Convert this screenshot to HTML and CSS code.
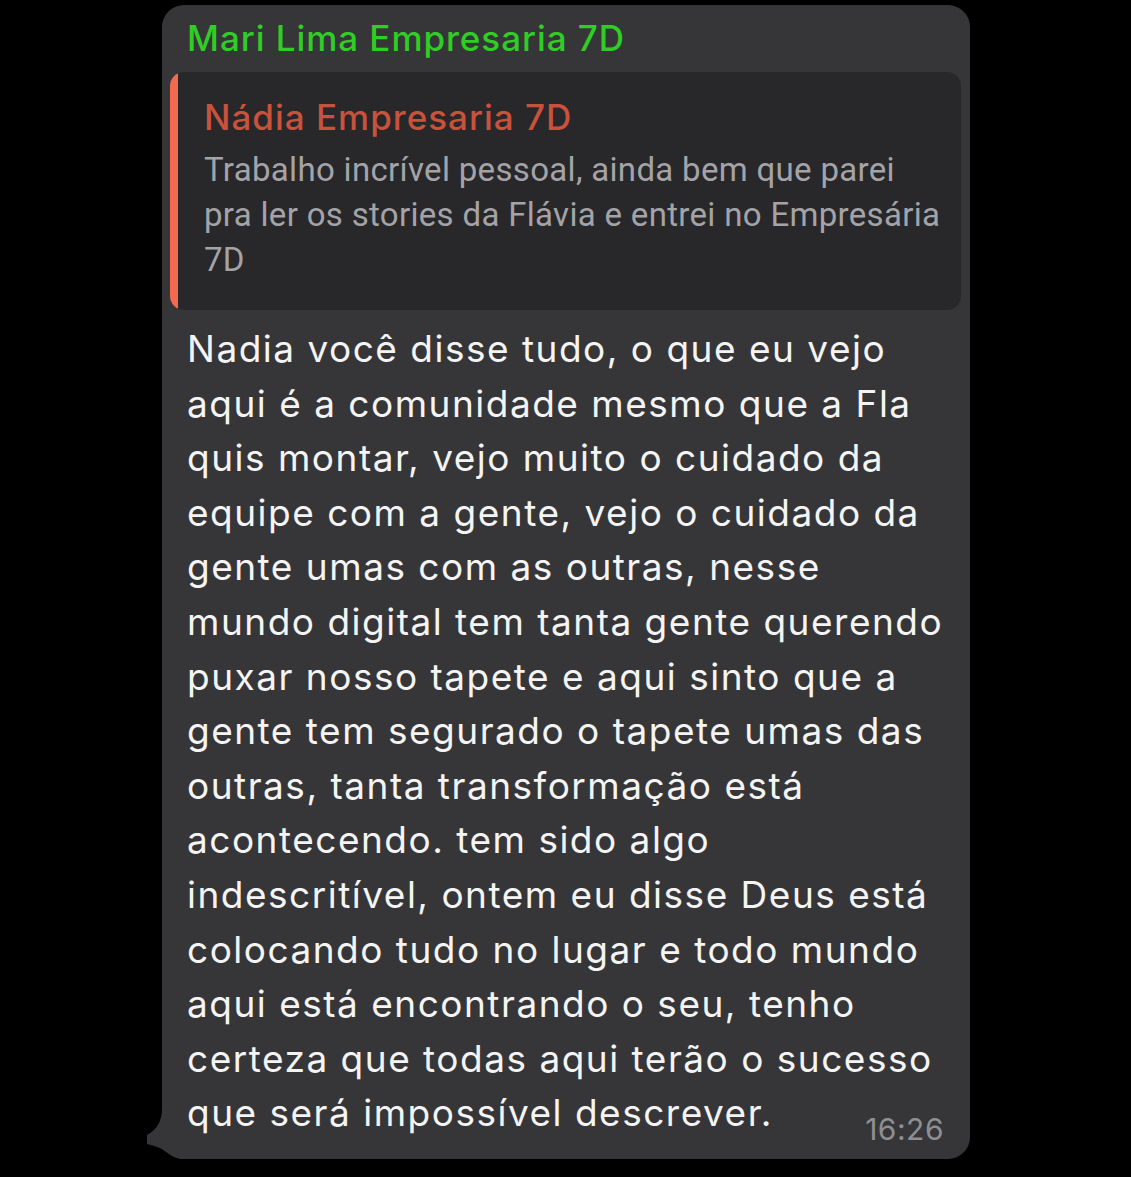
FILE: index.html
```html
<!DOCTYPE html>
<html lang="pt">
<head>
<meta charset="utf-8">
<title>Mensagem</title>
<link rel="stylesheet" href="styles.css">
</head>
<body>
<div class="bubble">
  <svg class="tail" width="36" height="50" viewBox="0 0 36 50" aria-hidden="true">
    <path d="M15 0 C15 13 9 21 0 26 L0 35 Q12 37 22 45 Q27 49 34 50 L36 50 L36 0 Z" fill="#363638"/>
  </svg>
  <div class="sender">Mari Lima Empresaria 7D</div>
  <div class="quote">
    <div class="quote-bar"></div>
    <div class="quote-body">
      <div class="quote-title">Nádia Empresaria 7D</div>
      <div class="quote-text">Trabalho incrível pessoal, ainda bem que parei<br>pra ler os stories da Flávia e entrei no Empresária<br>7D</div>
    </div>
  </div>
  <div class="message">
    <p class="message-text">Nadia você disse tudo, o que eu vejo<br>aqui é a comunidade mesmo que a Fla<br>quis montar, vejo muito o cuidado da<br>equipe com a gente, vejo o cuidado da<br>gente umas com as outras, nesse<br>mundo digital tem tanta gente querendo<br>puxar nosso tapete e aqui sinto que a<br>gente tem segurado o tapete umas das<br>outras, tanta transformação está<br>acontecendo. tem sido algo<br>indescritível, ontem eu disse Deus está<br>colocando tudo no lugar e todo mundo<br>aqui está encontrando o seu, tenho<br>certeza que todas aqui terão o sucesso<br>que será impossível descrever.</p>
    <span class="time">16:26</span>
  </div>
</div>
</body>
</html>
```
FILE: styles.css
```css
html, body {
  margin: 0;
  padding: 0;
  background: #000;
}
body {
  font-family: Inter, "Noto Sans", sans-serif;
  padding: 5px 0 0 162px;
  min-height: 1177px;
  box-sizing: border-box;
}
.bubble {
  position: relative;
  width: 808px;
  height: 1154px;
  box-sizing: border-box;
  background: #363638;
  border-radius: 22px;
  padding: 0 9px 0 8px;
}
.tail {
  position: absolute;
  left: -15px;
  bottom: 0;
  display: block;
}
.sender {
  position: relative;
  color: #2fcd26;
  font-size: 35px;
  font-weight: 500;
  line-height: 44px;
  padding: 11px 0 12px 17px;
  letter-spacing: 0.95px;
  white-space: nowrap;
}
.quote {
  display: flex;
  background: #28282a;
  border-radius: 14px;
  overflow: hidden;
  height: 238px;
}
.quote-bar {
  width: 8px;
  flex: none;
  background: #f46a51;
  border-radius: 8px 0 0 8px;
}
.quote-body {
  padding: 20px 0 0 26px;
  white-space: nowrap;
}
.quote-title {
  color: #c9523d;
  font-size: 35px;
  font-weight: 500;
  line-height: 50px;
  letter-spacing: 1px;
}
.quote-text {
  color: #a3a3a8;
  font-family: Roboto, "Noto Sans", sans-serif;
  font-size: 33px;
  line-height: 45px;
  margin-top: 5px;
  letter-spacing: 0.32px;
}
.message {
  position: relative;
  padding: 12px 0 0 17px;
}
.message-text {
  margin: 0;
  color: #f4f4f4;
  font-size: 37px;
  line-height: 54.6px;
  letter-spacing: 1.5px;
  white-space: nowrap;
}
.time {
  position: absolute;
  right: 17px;
  bottom: -6px;
  color: #8e8e93;
  font-size: 30px;
  line-height: 36px;
  letter-spacing: 0.5px;
}
```
